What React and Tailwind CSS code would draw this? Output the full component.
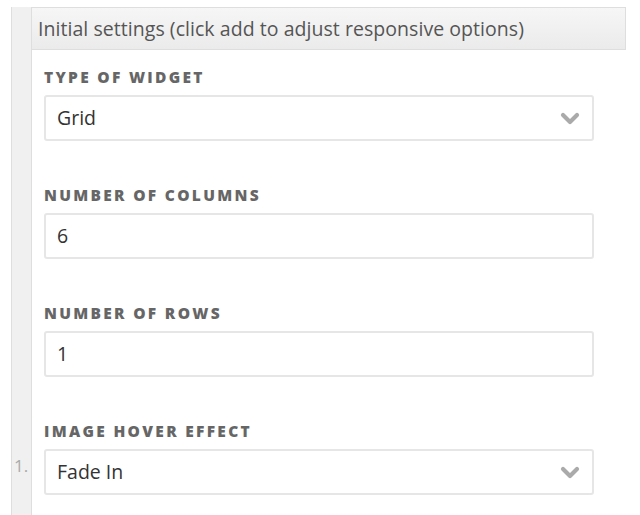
const fields = [
  { label: "Type of widget", value: "Grid", select: true },
  { label: "Number of columns", value: "6" },
  { label: "Number of rows", value: "1" },
  { label: "Image hover effect", value: "Fade In", select: true },
];

const Chevron = () => (
  <svg width="20" height="13" viewBox="0 0 20 13" className="text-[#aaaaaa]">
    <polyline points="3,3 10,10 17,3" fill="none" stroke="currentColor" strokeWidth="4.2" strokeLinecap="round" strokeLinejoin="round" />
  </svg>
);

const Field = ({ label, value, select }) => (
  <div className="flex flex-col">
    <label className="h-[25px] text-[15.5px] font-extrabold uppercase tracking-[2.3px] text-[#666] leading-[25px]">
      {label}
    </label>
    <div className="mt-[5px] h-[46px] w-[550px] flex items-center justify-between rounded-[3px] border-2 border-[#e6e6e6] bg-white pl-[11px] pr-[12px]">
      <span className="text-[19.5px] text-[#333]">{value}</span>
      {select && <Chevron />}
    </div>
  </div>
);

const App = () => {
  return (
    <div className="w-[640px] h-[515px] bg-white pt-[7px] pl-[11px] overflow-hidden" style={{ fontFamily: '"Open Sans", "Liberation Sans", Arial, sans-serif' }}>
      <div className="flex h-[520px]">
        <div className="w-[21px] shrink-0 bg-[#f0f0f0] border-l border-r border-[#dedede] flex flex-col justify-end pb-[49px]">
          <span className="text-[17px] text-[#aaa] pl-[2px]">1.</span>
        </div>
        <div className="flex-1 flex flex-col">
          <div className="w-[594px] h-[43px] flex items-center border border-l-0 border-[#dedede] bg-gradient-to-b from-[#f6f6f6] to-[#ebebeb] pl-[6px]">
            <span className="text-[19.5px] text-[#555] tracking-[0.05px]">Initial settings (click add to adjust responsive options)</span>
          </div>
          <div className="flex flex-col gap-[42px] pl-[12px] pt-[15px]">
            {fields.map((f) => (
              <Field key={f.label} {...f} />
            ))}
          </div>
        </div>
      </div>
    </div>
  );
};

export default App;
